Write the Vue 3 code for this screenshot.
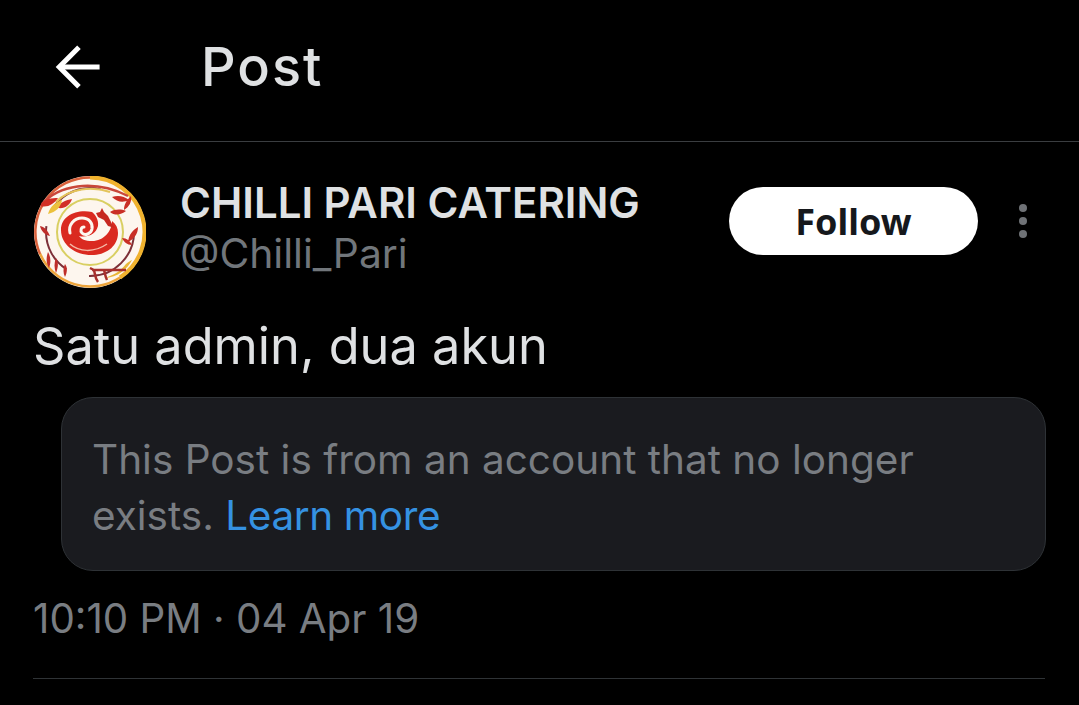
<template>
  <div class="screen">
    <header class="top-bar">
      <button class="back-btn" type="button" aria-label="Back">
        <svg viewBox="0 0 48 48" fill="none" stroke="#fff" stroke-width="5.500">
          <path d="M47 24H3" />
          <path d="M24.500 2.500L3 24L24.500 45.500" />
        </svg>
      </button>
      <h1 class="title">Post</h1>
    </header>

    <main class="post">
      <div class="author-row">
        <svg class="avatar" viewBox="0 0 112 112">
          <circle cx="56" cy="56" r="56" fill="#fdf6ee" />
          <!-- rim -->
          <path d="M56 1.500a54.500 54.500 0 0 1 30 100" fill="none" stroke="#f0b22e" stroke-width="4" />
          <path d="M86 101.500a54.500 54.500 0 0 1-80-24" fill="none" stroke="#eda43a" stroke-width="2.500" />
          <path d="M6 78A54.500 54.500 0 0 1 56 1.500" fill="none" stroke="#d9603a" stroke-width="2.500" />
          <!-- rings -->
          <circle cx="56" cy="56" r="44" fill="none" stroke="#7d3038" stroke-width="2" stroke-dasharray="70 24 50 16 58 58" />
          <circle cx="56" cy="56" r="33" fill="none" stroke="#d9cf62" stroke-width="2" />
          <path d="M8 28C24 10 58 2 94 20" fill="none" stroke="#c9473a" stroke-width="2.500" />
          <path d="M22 26C36 12 58 10 76 16" fill="none" stroke="#e4c45a" stroke-width="2" />
          <!-- leaves -->
          <path d="M6 30c4-8 12-8 18-8-4 6-10 10-18 8zM24 32c2-6 8-8 14-9-2 6-7 10-14 9z" fill="#d22f26" />
          <path d="M78 21c6-2 12-1 17 3-6 3-12 2-17-3zM76 36c5-3 11-3 16-1-5 4-11 5-16 1zM90 34c0-6 3-10 7-14 1 6-2 11-7 14zM94 66c1-8 5-12 10-15 0 7-4 12-10 15zM88 62c5 0 8 3 10 7-5 0-8-3-10-7z" fill="#c92f26" />
          <path d="M6 50c5 1 8 5 10 10-5-1-9-5-10-10zM14 76c-2 6-2 11 1 16 2-5 2-11-1-16zM22 82c-2 5-2 10 0 15 2-5 3-10 0-15zM31 88c-2 5-2 9 0 13 2-4 3-9 0-13z" fill="#bf2e2a" />
          <path d="M14 38c2-8 8-12 14-14-1 7-6 12-14 14z" fill="#ecc13c" />
          <path d="M70 102c8-2 16-6 22-14 2-2 4-3 6-4-4 8-14 18-28 18z" fill="#e9b738" />
          <path d="M58 94h34M60 94c1 4 1 8 4 12M70 94c1 3 1 6 3 10M60 94l-4-2" fill="none" stroke="#a8302c" stroke-width="2.500" />
          <!-- spiral -->
          <path d="M58 36C42 33 27 40 27 54c0 15 15 26 33 25 14-1 24-10 24-22 0-5-2-9-6-12 0 10-8 20-20 20-7 0-11-2-13-5 9 2 17-2 19-10 1-6-3-12-6-14z" fill="#da2a20" />
          <path d="M36 57c-2-8 4-15 12-15 7 0 11 5 10 11-1 5-7 7-10 4-2-2-1-6 2-6" fill="none" stroke="#fdf6ee" stroke-width="3" stroke-linecap="round" />
          <path d="M36 68c9 8 24 9 37 0" fill="none" stroke="#f4b9a6" stroke-width="1.500" />
          <path d="M62 37l4-1 2-4 2 4 4 4 4 8 3 4-7-2-4-6-6-3z" fill="#c62820" />
        </svg>
        <div class="names">
          <div class="display-name">CHILLI PARI CATERING</div>
          <div class="handle">@Chilli_Pari</div>
        </div>
        <button class="follow-btn" type="button">Follow</button>
        <div class="more" aria-label="More">
          <span></span><span></span><span></span>
        </div>
      </div>

      <p class="post-text">Satu admin, dua akun</p>

      <div class="notice">
        <span class="notice-line">This Post is from an account that no longer</span>
        <span class="notice-line">exists. <a class="learn-more">Learn more</a></span>
      </div>

      <div class="timestamp">10:10 PM · 04 Apr 19</div>
      <div class="divider"></div>
    </main>
  </div>
</template>

<script setup>
</script>

<style scoped>
.screen {
  width: 1079px;
  height: 705px;
  background: #000;
  overflow: hidden;
  font-family: Inter, "Liberation Sans", sans-serif;
  color: #e4e6e8;
}

.top-bar {
  display: flex;
  align-items: center;
  height: 133px;
  padding-left: 55px;
  padding-bottom: 8px;
  border-bottom: 1px solid #3a3d40;
}

.back-btn {
  width: 47px;
  height: 44px;
  padding: 0;
  margin-right: 99px;
  background: none;
  border: none;
}

.back-btn svg {
  display: block;
  width: 47px;
  height: 44px;
}

.title {
  margin: 0;
  font-size: 54px;
  font-weight: 500;
  letter-spacing: 2px;
  line-height: 1;
  color: #dfe1e3;
}

.post {
  padding: 0 34px 0 33px;
}

.author-row {
  display: flex;
  align-items: center;
  margin-top: 34px;
}

.avatar {
  width: 112px;
  height: 112px;
  margin-left: 1px;
  flex: none;
}

.names {
  flex: 1;
  margin-left: 34px;
  margin-top: -9px;
}

.display-name {
  margin-bottom: 4px;
  font-size: 42px;
  font-weight: 600;
  line-height: 46px;
  color: #dfe1e3;
  white-space: nowrap;
}

.handle {
  font-size: 40.800px;
  line-height: 46px;
  color: #71767b;
}

.follow-btn {
  width: 249px;
  height: 68px;
  margin-top: -22px;
  background: #fff;
  border: none;
  border-radius: 34px;
  font-family: "Noto Sans", sans-serif;
  font-size: 36px;
  font-weight: 700;
  color: #16181c;
}

.more {
  display: flex;
  flex-direction: column;
  gap: 5px;
  margin: -22px 18px 0 41px;
}

.more span {
  width: 8px;
  height: 8px;
  border-radius: 50%;
  background: #6f7276;
}

.post-text {
  margin: 22px 0 0;
  font-size: 50.500px;
  line-height: 72px;
  color: #dfe1e3;
}

.notice {
  margin: 15px 0 0 28px;
  padding: 34px 30px;
  width: 985px;
  height: 174px;
  box-sizing: border-box;
  background: #1a1b1f;
  border: 1px solid #2e3236;
  border-radius: 32px;
  font-size: 40.500px;
  line-height: 56px;
  color: #797d82;
}

.notice-line {
  display: block;
  white-space: nowrap;
}

.learn-more {
  color: #3592e2;
  letter-spacing: -0.400px;
}

.timestamp {
  margin-top: 22px;
  font-size: 40.300px;
  line-height: 52px;
  color: #797d82;
}

.divider {
  margin-top: 33px;
  height: 1px;
  background: #2f3336;
}
</style>

<style>
html, body {
  background: #000;
}
</style>
